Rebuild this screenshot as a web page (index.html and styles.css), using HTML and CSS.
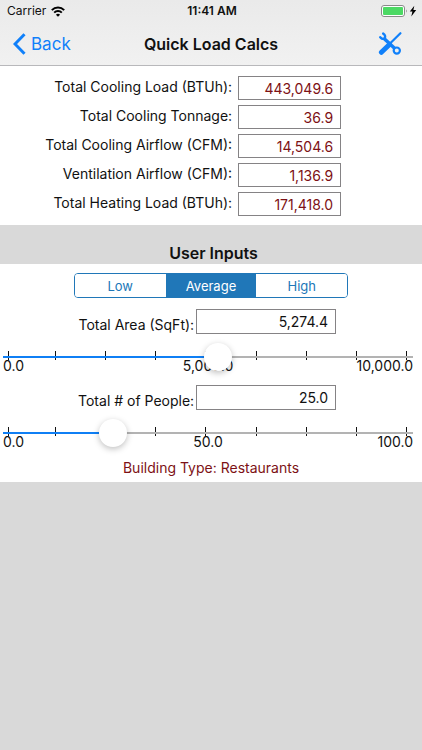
FILE: index.html
```html
<!DOCTYPE html>
<html lang="en">
<head>
    <meta charset="UTF-8">
    <meta name="viewport" content="width=device-width, initial-scale=1">
    <title>Quick Load Calcs</title>
    <link rel="stylesheet" href="styles.css">
</head>
<body>
    <header class="header">
        <div class="status">
            <div class="carrier">
                <span>Carrier</span>
                <svg width="14" height="11" viewBox="0 0 14 11" fill="none" stroke="#000" stroke-width="2">
                    <path d="M0.8 4.1a8.8 8.8 0 0 1 12.4 0"/>
                    <path d="M3.2 6.6a5.4 5.4 0 0 1 7.6 0"/>
                    <path d="M7 10.8L4.9 8.7a3 3 0 0 1 4.2 0z" fill="#000" stroke="none"/>
                </svg>
            </div>
            <span class="time">11:41 AM</span>
            <div class="battery">
                <svg width="36" height="12" viewBox="0 0 36 12">
                    <rect x="0.5" y="0.5" width="23" height="11" rx="2.5" fill="#fff" stroke="#8a8a8a"/>
                    <rect x="2" y="2" width="20" height="8" rx="1" fill="#4cd964"/>
                    <path d="M25 4.2q1.8 1.8 0 3.6z" fill="#8a8a8a"/>
                    <path d="M33.3 .8L28.8 6.6h2.6L30.3 11.4l4.9-6.3h-2.8z" fill="#000"/>
                </svg>
            </div>
        </div>
        <nav class="nav">
            <a href="#" class="back">
                <svg width="13" height="22" viewBox="0 0 13 22" fill="none" stroke="#1080fa" stroke-width="3">
                    <path d="M11.5 1.2L2 11l9.5 9.8"/>
                </svg>
                Back
            </a>
            <h1>Quick Load Calcs</h1>
            <button type="button" class="tools" aria-label="Settings">
                <svg width="24" height="24" viewBox="0 0 24 24" fill="none" stroke="#1080fa">
                    <path d="M22.4 1.2L12 11.5" stroke-width="2.2" stroke-linecap="round"/>
                    <path d="M11.5 12.5L3.4 20.3" stroke-width="5" stroke-linecap="round"/>
                    <path d="M5.5 6L16.8 16.6" stroke-width="3.4"/>
                    <path d="M2.2 5.2A3.2 3.2 0 0 0 6.6 6.4 3.4 3.4 0 0 0 5.2 1.6" stroke-width="2.4" stroke-linecap="round"/>
                    <circle cx="18.8" cy="18.6" r="3.1" stroke-width="2.2" fill="#eeeeee"/>
                </svg>
            </button>
        </nav>
    </header>

    <main>
        <section class="results">
            <label for="coolingLoad">Total Cooling Load (BTUh):</label>
            <input type="text" id="coolingLoad" class="box" value="443,049.6" readonly>
            <label for="tonnage">Total Cooling Tonnage:</label>
            <input type="text" id="tonnage" class="box" value="36.9" readonly>
            <label for="coolingAir">Total Cooling Airflow (CFM):</label>
            <input type="text" id="coolingAir" class="box" value="14,504.6" readonly>
            <label for="ventAir">Ventilation Airflow (CFM):</label>
            <input type="text" id="ventAir" class="box" value="1,136.9" readonly>
            <label for="heatingLoad">Total Heating Load (BTUh):</label>
            <input type="text" id="heatingLoad" class="box" value="171,418.0" readonly>
        </section>

        <h2>User Inputs</h2>

        <form class="inputs">
            <div class="segments">
                <button type="button">Low</button>
                <button type="button" class="selected">Average</button>
                <button type="button">High</button>
            </div>

            <div class="field">
                <label for="area">Total Area (SqFt):</label>
                <input type="text" id="area" class="box" value="5,274.4">
            </div>
            <div class="slider">
                <div class="ticks"><i></i><i></i><i></i><i></i><i></i><i></i><i></i><i></i><i></i></div>
                <div class="scale"><span>0.0</span><span>5,000.0</span><span>10,000.0</span></div>
                <input type="range" min="0" max="10000" step="0.1" value="5274.4" style="--fill: 52.7%" aria-label="Total Area">
            </div>

            <div class="field">
                <label for="people">Total # of People:</label>
                <input type="text" id="people" class="box" value="25.0">
            </div>
            <div class="slider">
                <div class="ticks"><i></i><i></i><i></i><i></i><i></i><i></i><i></i><i></i><i></i></div>
                <div class="scale"><span>0.0</span><span>50.0</span><span>100.0</span></div>
                <input type="range" min="0" max="100" value="25" style="--fill: 25%" aria-label="Total Number of People">
            </div>

            <p class="building">Building Type: Restaurants</p>
        </form>
    </main>
</body>
</html>
```

FILE: styles.css
```css
* {
    margin: 0;
    padding: 0;
    box-sizing: border-box;
}

body {
    font-family: Inter, "Liberation Sans", sans-serif;
    font-size: 14px;
    line-height: 18px;
    background-color: #d9d9d9;
    color: #111;
}

svg {
    display: block;
}

input, button {
    font: inherit;
}

/* top bar */
.header {
    background: linear-gradient(#eaeaea, #f1f1f1);
    border-bottom: 1px solid #b8b8bb;
}

.status, .nav {
    display: grid;
    grid-template-columns: 1fr auto 1fr;
    align-items: center;
}

.status {
    height: 22px;
    padding: 0 5px 0 7px;
    font-size: 12px;
}

.carrier {
    display: flex;
    align-items: center;
    gap: 5px;
}

.time {
    font-weight: 600;
}

.battery {
    justify-self: end;
}

.nav {
    height: 43px;
    padding: 0 13px;
}

.back {
    display: flex;
    align-items: center;
    gap: 5px;
    font-size: 17px;
    color: #1080fa;
    text-decoration: none;
}

h1 {
    font-size: 16px;
    font-weight: 600;
}

.tools {
    justify-self: end;
    padding: 0 7px;
    border: none;
    background: none;
    cursor: pointer;
}

/* calculated values */
.results {
    display: grid;
    grid-template-columns: 55% 103px;
    gap: 5px 6px;
    padding: 10px 0 9px;
    background-color: #fff;
}

.results label {
    text-align: right;
    line-height: 22px;
}

.box {
    height: 24px;
    padding: 0 7px 0 0;
    border: 1px solid #858385;
    border-radius: 0;
    background-color: #fff;
    color: #111;
    text-align: right;
    outline: none;
}

.results .box {
    color: #7d1115;
}

h2 {
    padding: 19px 0 2px 5px;
    font-size: 16px;
    font-weight: 600;
    text-align: center;
}

/* user inputs */
.inputs {
    padding: 9px 0 7px;
    background-color: #fff;
}

.segments {
    display: flex;
    width: 65%;
    height: 25px;
    margin: 0 auto 11px;
    border: 1px solid #2077b8;
    border-radius: 4px;
    overflow: hidden;
}

.segments button {
    flex: 1;
    border: none;
    background-color: #fff;
    color: #2077b8;
    font-size: 13px;
    cursor: pointer;
}

.segments .selected {
    background-color: #2077b8;
    color: #fff;
}

.field {
    display: grid;
    grid-template-columns: 46% 140px;
    gap: 2px;
    align-items: end;
}

.field label {
    text-align: right;
}

.field .box {
    height: 25px;
}

.slider {
    display: grid;
    height: 32px;
    margin: 9px 9px 10px 3px;
}

.slider > * {
    grid-area: 1 / 1;
}

.ticks {
    display: grid;
    grid-template-columns: 47fr repeat(7, 50fr) 1px;
    padding: 8px 6px 0 5px;
}

.ticks i {
    width: 1px;
    height: 9px;
    background-color: #111;
}

.scale {
    display: grid;
    grid-template-columns: 1fr auto 1fr;
    align-self: end;
}

.scale span:last-child {
    text-align: right;
}

.slider input {
    -webkit-appearance: none;
    appearance: none;
    width: 100%;
    height: 28px;
    background: none;
}

.slider input::-webkit-slider-runnable-track {
    height: 28px;
    background: linear-gradient(to right, #0f7ff5 var(--fill), #b3b3b3 var(--fill)) center / 100% 2px no-repeat;
}

.slider input::-webkit-slider-thumb {
    -webkit-appearance: none;
    width: 28px;
    height: 28px;
    border-radius: 50%;
    background-color: #fff;
    box-shadow: 0 2px 6px rgba(0, 0, 0, 0.25);
}

.building {
    line-height: 14px;
    color: #7d1115;
    text-align: center;
}
```
